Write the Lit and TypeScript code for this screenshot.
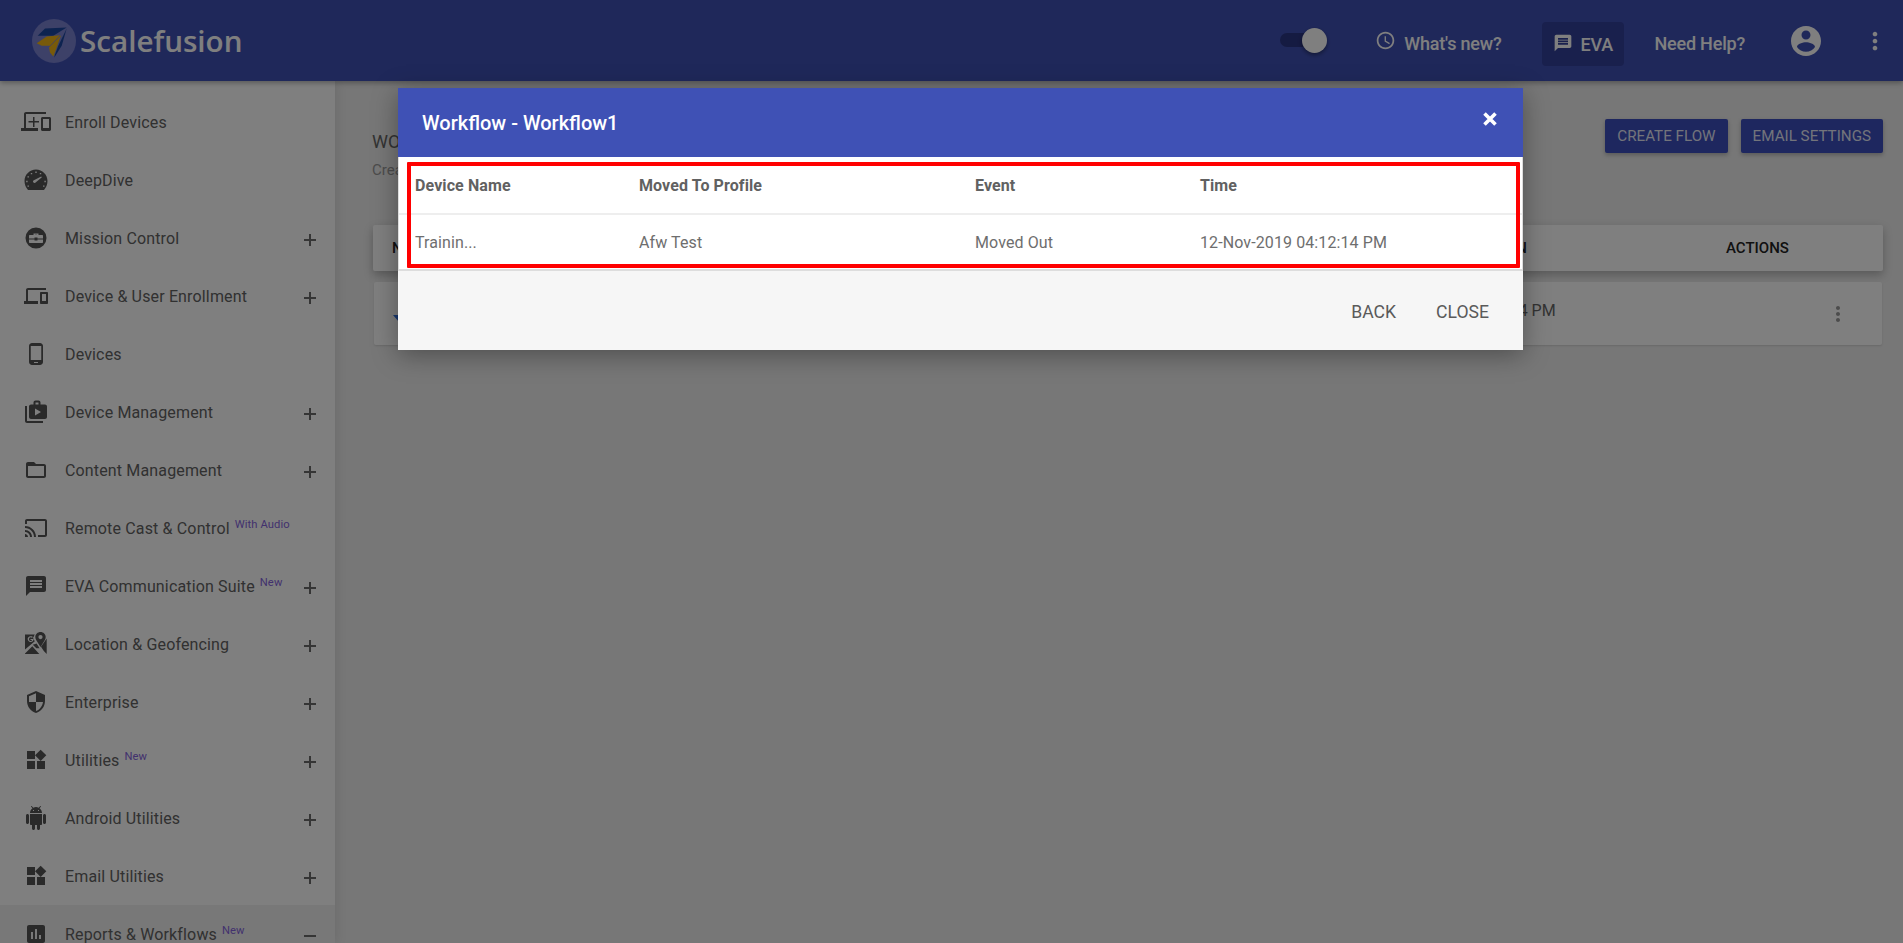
import { LitElement, html, css, svg } from "lit";
import { customElement } from "lit/decorators.js";

const P = {
  devices: "M4 6h18V4H4c-1.1 0-2 .9-2 2v11H0v3h14v-3H4V6zm19 2h-6c-.55 0-1 .45-1 1v10c0 .55.45 1 1 1h6c.55 0 1-.45 1-1V9c0-.55-.45-1-1-1zm-1 9h-4v-7h4v7z",
  phone: "M16 1H8C6.34 1 5 2.34 5 4v16c0 1.66 1.34 3 3 3h8c1.66 0 3-1.34 3-3V4c0-1.66-1.34-3-3-3zm-2 20h-4v-1h4v1zm3.25-3H6.75V4h10.5v14z",
  folder: "M20 6h-8l-2-2H4c-1.1 0-1.99.9-1.99 2L2 18c0 1.1.9 2 2 2h16c1.1 0 2-.9 2-2V8c0-1.1-.9-2-2-2zm0 12H4V8h16v10z",
  cast: "M21 3H3c-1.1 0-2 .9-2 2v3h2V5h18v14h-7v2h7c1.1 0 2-.9 2-2V5c0-1.1-.9-2-2-2zM1 18v3h3c0-1.66-1.34-3-3-3zm0-4v2c2.76 0 5 2.24 5 5h2c0-3.87-3.13-7-7-7zm0-4v2c4.97 0 9 4.03 9 9h2c0-6.08-4.93-11-11-11z",
  message: "M20 2H4c-1.1 0-1.99.9-1.99 2L2 22l4-4h14c1.1 0 2-.9 2-2V4c0-1.1-.9-2-2-2zm-2 12H6v-2h12v2zm0-3H6V9h12v2zm0-3H6V6h12v2z",
  shield: "M12 1L3 5v6c0 5.55 3.84 10.74 9 12 5.16-1.26 9-6.45 9-12V5l-9-4zm0 10.99h7c-.53 4.12-3.28 7.79-7 8.94V12H5V6.3l7-3.11v8.8z",
  widgets: "M13 13v8h8v-8h-8zM3 21h8v-8H3v8zM3 3v8h8V3H3zm13.66-1.31L11 7.34 16.66 13l5.66-5.66-5.66-5.65z",
  android: "M6 18c0 .55.45 1 1 1h1v3.5c0 .83.67 1.5 1.5 1.5s1.5-.67 1.5-1.5V19h2v3.5c0 .83.67 1.5 1.5 1.5s1.5-.67 1.5-1.5V19h1c.55 0 1-.45 1-1V8H6v10zM3.5 8C2.67 8 2 8.67 2 9.5v7c0 .83.67 1.5 1.5 1.5S5 17.33 5 16.5v-7C5 8.67 4.33 8 3.5 8zm17 0c-.83 0-1.5.67-1.5 1.5v7c0 .83.67 1.5 1.5 1.5s1.5-.67 1.5-1.5v-7c0-.83-.67-1.5-1.5-1.5zm-4.97-5.84l1.3-1.3c.2-.2.2-.51 0-.71-.2-.2-.51-.2-.71 0l-1.48 1.48C13.85 1.23 12.95 1 12 1c-.96 0-1.86.23-2.66.63L7.85.15c-.2-.2-.51-.2-.71 0-.2.2-.2.51 0 .71l1.31 1.31C6.97 3.26 6 5.01 6 7h12c0-1.99-.97-3.75-2.47-4.84zM10 5H9V4h1v1zm5 0h-1V4h1v1z",
  chart: "M19 3H5c-1.1 0-2 .9-2 2v14c0 1.1.9 2 2 2h14c1.1 0 2-.9 2-2V5c0-1.1-.9-2-2-2zM9 17H7v-7h2v7zm4 0h-2V7h2v10zm4 0h-2v-4h2v4z",
  account: "M12 2C6.48 2 2 6.48 2 12s4.48 10 10 10 10-4.48 10-10S17.52 2 12 2zm0 3c1.66 0 3 1.34 3 3s-1.34 3-3 3-3-1.34-3-3 1.34-3 3-3zm0 14.2c-2.5 0-4.71-1.28-6-3.22.03-1.99 4-3.08 6-3.08 1.99 0 5.97 1.09 6 3.08-1.29 1.94-3.5 3.22-6 3.22z",
  more: "M12 8c1.1 0 2-.9 2-2s-.9-2-2-2-2 .9-2 2 .9 2 2 2zm0 2c-1.1 0-2 .9-2 2s.9 2 2 2 2-.9 2-2-.9-2-2-2zm0 6c-1.1 0-2 .9-2 2s.9 2 2 2 2-.9 2-2-.9-2-2-2z",
  clock: "M11.99 2C6.47 2 2 6.48 2 12s4.47 10 9.99 10C17.52 22 22 17.52 22 12S17.52 2 11.99 2zM12 20c-4.42 0-8-3.58-8-8s3.58-8 8-8 8 3.58 8 8-3.58 8-8 8zm.5-13H11v6l5.25 3.15.75-1.23-4.5-2.67z",
  gauge: "M12 1.500C5.600 1.500 .5 6.700 .5 13c0 3.500 1.400 6.700 3.500 9h16c2.100-2.300 3.500-5.500 3.500-9 0-6.300-5.100-11.500-11.500-11.500zM11.300 3.600h1.400V5h-1.400zM6.800 4.900h1.400v1.400H6.800zM15.800 4.900h1.400v1.400h-1.400zM3.500 8.200h1.400v1.400H3.500zM2.200 12.800h1.400v1.400H2.200zM20.400 12.800h1.400v1.400h-1.400zM3.500 17.400h1.400v1.400H3.500zM19.100 17.400h1.400v1.400h-1.400zM9.400 12.600l7.800-4.200.7.9-6.600 5.500c-1.300.9-3.200-1.100-1.900-2.200z",
  mission: "M12 1.500a10.500 10.500 0 1 0 0 21 10.500 10.500 0 0 0 0-21zM9.500 7.500h5V9H18c.6 0 1 .4 1 1v2.500h-5.500v-1h-3v1H5V10c0-.6.4-1 1-1h3.500zM11 8.700V9h2v-.3zM5 13.500h5.500v1h3v-1H19V16c0 .6-.4 1-1 1H6c-.6 0-1-.4-1-1z",
  play: "M3 6H1v15c0 1.100.9 2 2 2h16v-2H3zM9.500 4.500V2.500c0-1.100.9-2 2-2h3c1.100 0 2 .9 2 2v2H21c1.100 0 2 .9 2 2V17c0 1.100-.9 2-2 2H7c-1.100 0-2-.9-2-2V6.500c0-1.100.9-2 2-2zM11.500 4.500h3v-2h-3zM11 8.500v7l6-3.500z",
  map: "M16.500 0c-2.900 0-5.200 2.300-5.200 5.100 0 1.200.4 2.300 1 3.200l4.200 6.700 4.200-6.700c.6-.9 1-2 1-3.200C21.700 2.300 19.400 0 16.500 0zm0 7.200a2.100 2.100 0 1 1 0-4.200 2.100 2.100 0 0 1 0 4.200zM1 2.500h9.800c-.7.800-1.200 2-1.300 3.100-.8-1.100-2-1.400-3-1.300-1.700.1-2.800 1.300-2.800 2.800s1.200 2.900 2.900 2.900c1.800 0 2.900-1.100 2.900-3h-3v1.100h1.700c-.2.700-.8 1-1.500 1-.9 0-1.700-.8-1.700-1.900s.8-1.900 1.700-1.900c.5 0 .9.200 1.200.5l.9-.8c.3 1.600 1 2.600 2 4.200L1 17.500zM12.600 11.400l3 4.800-3.300 0-3.500-3.500zM22.700 6.400V22L19.800 19.100l-2.800-4.300zM8.300 14.200l7 7.800H1v-.6z",
};

const NAV: { t: string; i: string; plus?: boolean; sup?: string; open?: boolean }[] = [
  { t: "Enroll Devices", i: "enroll" },
  { t: "DeepDive", i: "gauge" },
  { t: "Mission Control", i: "mission", plus: true },
  { t: "Device & User Enrollment", i: "devices", plus: true },
  { t: "Devices", i: "phone" },
  { t: "Device Management", i: "play", plus: true },
  { t: "Content Management", i: "folder", plus: true },
  { t: "Remote Cast & Control", i: "cast", sup: "With Audio" },
  { t: "EVA Communication Suite", i: "message", plus: true, sup: "New" },
  { t: "Location & Geofencing", i: "map", plus: true },
  { t: "Enterprise", i: "shield", plus: true },
  { t: "Utilities", i: "widgets", plus: true, sup: "New" },
  { t: "Android Utilities", i: "android", plus: true },
  { t: "Email Utilities", i: "widgets", plus: true },
  { t: "Reports & Workflows", i: "chart", sup: "New", open: true },
];

const EO = new Set(["gauge", "mission", "play", "map"]);

const icon = (name: string, cls = "ic") =>
  svg`<svg class=${cls} viewBox="0 0 24 24"><path fill="currentColor" fill-rule=${EO.has(name) ? "evenodd" : "nonzero"} d=${(P as any)[name]}></path></svg>`;

@customElement("app-root")
export class AppRoot extends LitElement {
  static styles = css`
    :host { display: block; position: relative; height: 100vh; overflow: hidden; font-family: Roboto, "Liberation Sans", sans-serif; background: #eee; color: #333; }
    * { box-sizing: border-box; }
    .top { height: 81px; background: #3f51b5; display: flex; align-items: center; padding-left: 32px; color: #fff; position: relative; z-index: 2; box-shadow: 0 2px 5px rgba(0,0,0,.3); }
    .logo { width: 44px; height: 44px; flex: none; }
    .brand { font-family: "Open Sans", sans-serif; font-size: 29.600px; font-weight: 600; margin-left: 4px; margin-top: -1px; }
    .tools { margin-left: auto; display: flex; align-items: center; height: 100%; }
    .toggle { width: 47px; height: 25px; position: relative; margin-right: 48px; margin-top: -1px; }
    .track { position: absolute; left: 0; top: 5px; width: 32px; height: 14px; border-radius: 7px; background: #2b3684; }
    .thumb { position: absolute; right: 0; top: 0; width: 25px; height: 25px; border-radius: 50%; background: #fff; box-shadow: 0 2px 4px rgba(0,0,0,.4); }
    .tl { font-size: 18px; font-weight: 500; letter-spacing: -.2px; white-space: nowrap; margin-top: 6px; }
    .clock { width: 21px; height: 21px; margin-right: 8px; margin-top: -1px; flex: none; }
    .eva { display: flex; align-items: center; height: 44px; width: 82px; margin: 7px 30px 0 41px; padding-left: 11px; background: #33409a; border-radius: 4px; }
    .eva svg { width: 20px; height: 20px; margin-right: 7px; margin-top: -2px; }
    .acc { width: 36px; height: 36px; margin-left: 43px; margin-top: 0; flex: none; }
    .dots { width: 28px; height: 28px; margin-left: 37px; margin-right: 14px; margin-top: 0; flex: none; }

    .body { display: flex; height: calc(100% - 81px); }
    .side { width: 335px; flex: none; background: #fff; padding-top: 12px; box-shadow: 0 0 12px rgba(0,0,0,.12); position: relative; z-index: 1; }
    .nav { height: 58px; display: flex; align-items: center; padding-left: 24px; color: #555; font-size: 16px; font-weight: 400; letter-spacing: .15px; white-space: nowrap; }
    .nav.open { background: #f0f0f0; }
    .ic { width: 24px; height: 24px; flex: none; margin-right: 17px; }
    .ic.wide { width: 30px; height: 24px; margin-left: -3px; margin-right: 14px; }
    .lab { color: #626262; }
    sup { font-size: 11.200px; font-weight: 400; color: #8463dc; line-height: 0; vertical-align: baseline; position: relative; top: -3px; margin-left: 5px; letter-spacing: .1px; align-self: flex-start; margin-top: 29px; }
    .pm { margin-left: auto; margin-right: 17px; width: 16px; height: 16px; margin-top: 4px; flex: none; color: #6b6b6b; }

    .main { flex: 1; min-width: 0; padding: 38px 20px 0 38px; }
    .head { display: flex; justify-content: space-between; }
    .title { font-size: 18px; color: #666; margin: 12px 0 0 -1px; }
    .desc { font-size: 15px; color: #999; margin: 9px 0 0 -1px; }
    .btns { display: flex; gap: 13px; }
    .btn { height: 34px; padding: 0 12px; border-radius: 2px; background: #3c4fbf; color: rgba(255,255,255,.88); font-size: 15.200px; display: flex; align-items: center; box-shadow: 0 2px 4px rgba(0,0,0,.25); }
    .thead { height: 46px; margin-top: 46px; background: #fff; border-radius: 2px; display: grid; grid-template-columns: 1fr 288px 157px; align-items: center; padding: 0 0 0 19px; font-size: 15px; color: #222; box-shadow: 0 4px 10px rgba(0,0,0,.25); font-weight: 500; }
    .trow { height: 63px; margin: 11px 1px 0; background: #fff; border-radius: 2px; display: flex; align-items: center; box-shadow: 0 1px 2px rgba(0,0,0,.12); position: relative; color: #666; }
    .tri { margin-left: 19px; margin-top: 10px; width: 0; height: 0; border-left: 6px solid transparent; border-right: 6px solid transparent; border-top: 7px solid #3070e0; }
    .when { margin-left: 966px; font-size: 16px; margin-top: -7px; width: 200px; white-space: nowrap; }
    .rdots { width: 24px; height: 24px; margin-left: auto; margin-right: 32px; color: #999; flex: none; }

    .backdrop { position: absolute; inset: 0; background: rgba(0,0,0,.5); z-index: 5; }
    .modal { position: absolute; left: 398px; top: 88px; width: 1125px; height: 262px; background: #f6f6f6; display: flex; flex-direction: column; box-shadow: 0 5px 24px rgba(0,0,0,.35); }
    .mh { height: 69px; background: #3f51b5; color: #fff; display: flex; align-items: center; justify-content: space-between; padding: 0 26px 0 24px; font-size: 20px; font-weight: 500; flex: none; }
    .x { width: 14px; height: 14px; margin-top: -8px; }
    .tbl { background: #fff; flex: none; position: relative; border: solid #ddd; border-width: 0 1px 2px 1px; }
    .row { display: grid; grid-template-columns: 224px 336px 225px 1fr; padding-left: 16px; align-items: center; color: #6e6e6e; font-size: 16px; letter-spacing: .1px; }
    .row.h { height: 58px; font-weight: 700; color: #616161; border-bottom: 2px solid #eee; }
    .row.d { height: 54px; }
    .mark { position: absolute; left: 8px; right: 2px; top: 5px; bottom: 1px; border: 4px solid #f00; pointer-events: none; border-radius: 1px; }
    .mf { flex: 1; display: flex; justify-content: flex-end; align-items: center; gap: 40px; padding: 2px 34px 0 0; font-size: 17.600px; color: #5a5a5a; }
  `;

  render() {
    return html`
      <div class="top">
        <svg class="logo" viewBox="0 0 44 44">
          <circle cx="22" cy="22" r="22" fill="#7a82d0"></circle>
          <path fill="#1a46a0" d="M5.700 16.800L13 9.500l21.700-1-13.400 8.300z"></path>
          <path fill="#f0b414" d="M4.700 24.200l10-6.700 13.300-1.300-10 10.600H9.700z"></path>
          <path fill="#f0b414" d="M17 28.500L29 16.200l-4.300 12.300-3.400 9-3.300-4z"></path>
          <path fill="#1a46a0" d="M22.300 38.500l7.400-11.700 5-17.300-8.400 17.300-3.400 9z"></path>
        </svg>
        <span class="brand">Scalefusion</span>
        <div class="tools">
          <div class="toggle"><span class="track"></span><span class="thumb"></span></div>
          ${icon("clock", "clock")}
          <span class="tl">What's new?</span>
          <div class="eva tl">${icon("message", "")}EVA</div>
          <span class="tl">Need Help?</span>
          ${icon("account", "acc")}
          ${icon("more", "dots")}
        </div>
      </div>
      <div class="body">
        <div class="side">
          ${NAV.map((n) => html`
            <div class="nav ${n.open ? "open" : ""}">
              ${n.i === "enroll"
                ? html`<svg class="ic wide" viewBox="0 0 30 24"><path fill="currentColor" d="M5 4h20V2H5c-1.100 0-2 .9-2 2v14H0v3h17v-3H5zM28.500 7h-7c-.8 0-1.500.7-1.500 1.500v11c0 .8.7 1.500 1.500 1.500h7c.8 0 1.500-.7 1.500-1.500v-11c0-.8-.7-1.500-1.500-1.500zM28 18h-6V9h6zM12 7h1.500v4H18v1.500h-4.500V17H12v-4.500H7.500V11H12z"></path></svg>`
                : icon(n.i)}
              <span class="lab">${n.t}</span>${n.sup ? html`<sup>${n.sup}</sup>` : ""}
              ${n.plus
                ? html`<svg class="pm" viewBox="0 0 16 16"><path fill="currentColor" d="M7 2h2v5h5v2H9v5H7V9H2V7h5z"></path></svg>`
                : n.open
                  ? html`<svg class="pm" viewBox="0 0 16 16"><path fill="currentColor" d="M2 7h12v2H2z"></path></svg>`
                  : ""}
            </div>`)}
        </div>
        <div class="main">
          <div class="head">
            <div>
              <div class="title">WORKFLOWS</div>
              <div class="desc">Create and manage workflows</div>
            </div>
            <div class="btns"><div class="btn">CREATE FLOW</div><div class="btn">EMAIL SETTINGS</div></div>
          </div>
          <div class="thead"><span>NAME</span><span>CREATED ON</span><span>ACTIONS</span></div>
          <div class="trow">
            <span class="tri"></span>
            <span class="when">12-Nov-2019 04:12:14 PM</span>
            ${icon("more", "rdots")}
          </div>
        </div>
      </div>
      <div class="backdrop">
        <div class="modal">
          <div class="mh">
            <span>Workflow - Workflow1</span>
            <svg class="x" viewBox="0 0 14 14"><path stroke="#fff" stroke-width="3.600" d="M1.500 1.500l11 11M12.500 1.500l-11 11"></path></svg>
          </div>
          <div class="tbl">
            <div class="row h"><span>Device Name</span><span>Moved To Profile</span><span>Event</span><span>Time</span></div>
            <div class="row d"><span>Trainin...</span><span>Afw Test</span><span>Moved Out</span><span>12-Nov-2019 04:12:14 PM</span></div>
            <div class="mark"></div>
          </div>
          <div class="mf"><span>BACK</span><span>CLOSE</span></div>
        </div>
      </div>
    `;
  }
}
